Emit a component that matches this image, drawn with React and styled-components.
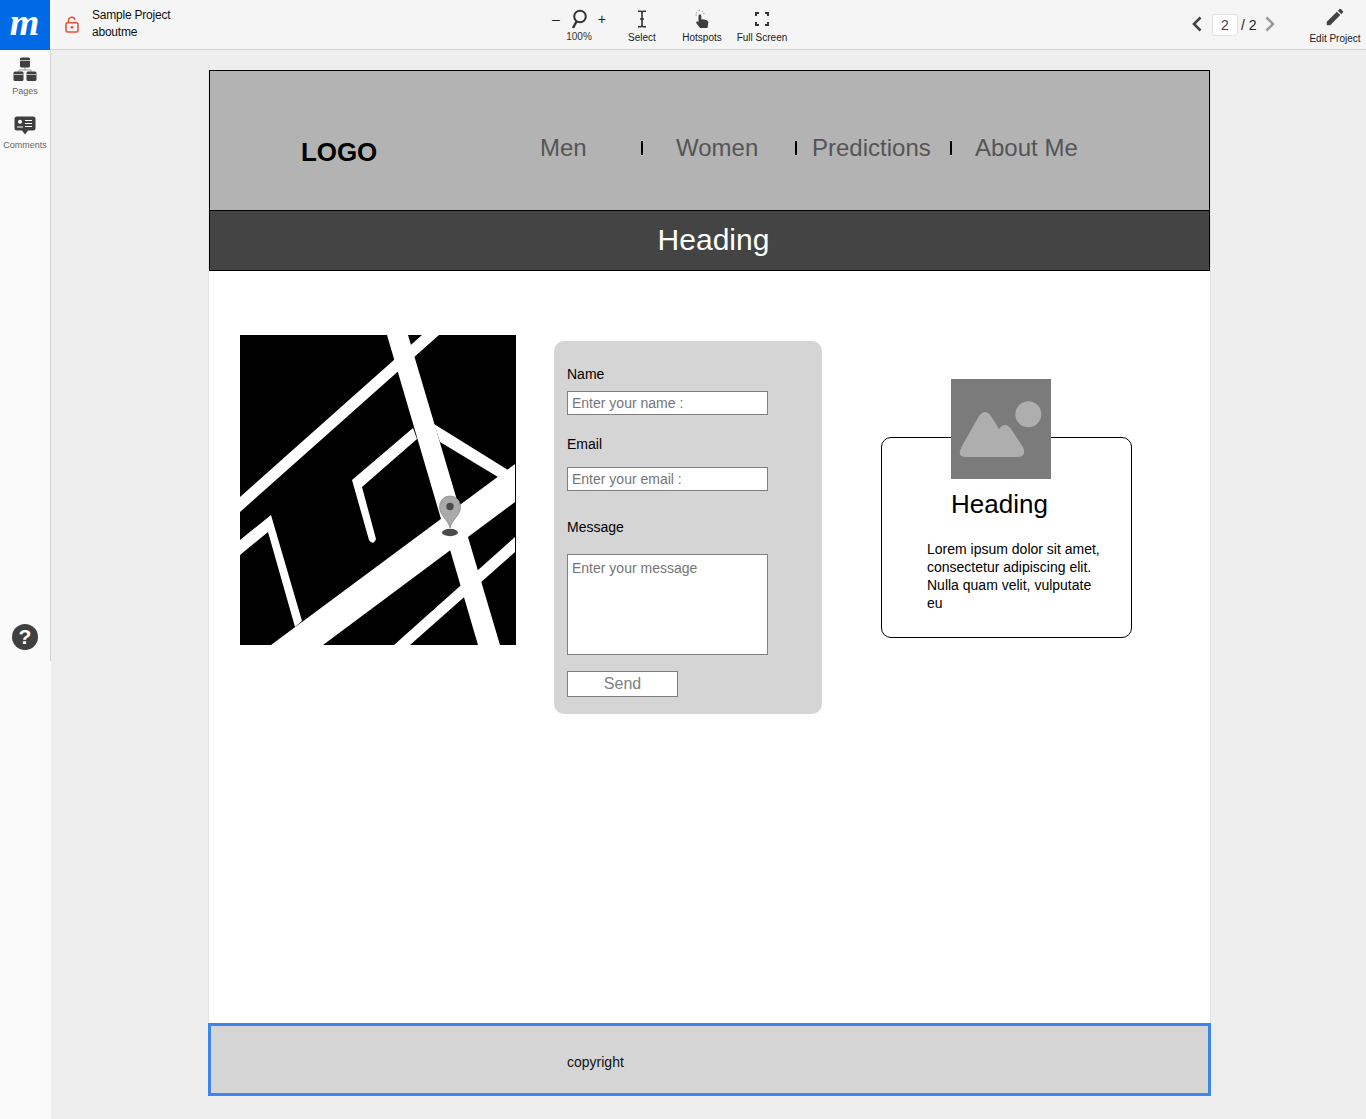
import styled, { createGlobalStyle } from "styled-components";
import { MdEdit } from "react-icons/md";

const GlobalStyle = createGlobalStyle`
  html, body {
    margin: 0;
    padding: 0;
    background: #eeeeee;
    font-family: "Liberation Sans", Arial, sans-serif;
    overflow: hidden;
  }
  * {
    box-sizing: border-box;
  }
`;

const Screen = styled.div`
  display: flex;
  flex-direction: column;
  width: 1366px;
  height: 1119px;
  overflow: hidden;
`;

const TopBar = styled.header`
  display: flex;
  align-items: stretch;
  flex: none;
  height: 50px;
  background: #f5f5f5;
  border-bottom: 1px solid #d2d2d2;
`;

const Brand = styled.div`
  display: flex;
  justify-content: center;
  align-items: center;
  flex: none;
  width: 50px;
  height: 50px;
  padding: 0 1px 6px 0;
  background: #0069e6;
  color: #fff;
  font-family: "Liberation Serif", serif;
  font-size: 38px;
  font-weight: bold;
  font-style: italic;
  line-height: 38px;
`;

const ProjectInfo = styled.div`
  display: flex;
  align-items: flex-start;
  flex: none;
  width: 500px;
  padding: 7px 0 0 15px;
`;

const LockWrap = styled.span`
  display: block;
  width: 27px;
  height: 26px;
  padding-top: 9px;
`;

const ProjectName = styled.div`
  font-size: 12px;
  line-height: 17px;
  letter-spacing: -0.22px;
  color: #111;
`;

const Tool = styled.div`
  display: flex;
  flex-direction: column;
  align-items: center;
  flex: none;
  width: ${(props) => props.$width}px;
  height: 49px;
`;

const ToolIcon = styled.div`
  display: flex;
  justify-content: center;
  align-items: center;
  gap: ${(props) => props.$gap || 0}px;
  height: 32px;
  padding-top: 5px;
  color: #222;
  font-size: 14px;
`;

const ToolLabel = styled.span`
  font-size: 10px;
  line-height: 12px;
  color: #222;
`;

const ZoomLabel = styled(ToolLabel)`
  margin-top: -1px;
  color: #333;
`;

const Pager = styled.div`
  display: flex;
  align-items: flex-start;
  margin-left: auto;
  padding: 14px 0 0 0;
`;

const PageBox = styled.div`
  width: 26px;
  height: 22px;
  margin: 0 3px 0 9px;
  background: #fff;
  border: 1px solid #e2e2e2;
  border-radius: 3px;
  text-align: center;
  font-size: 14px;
  line-height: 20px;
  color: #444;
`;

const PageTotal = styled.span`
  width: 20px;
  margin-right: 3px;
  font-size: 14px;
  line-height: 22px;
  color: #222;
`;

const EditTool = styled.div`
  display: flex;
  flex-direction: column;
  align-items: center;
  flex: none;
  margin: 0 5px 0 33px;
  width: 52px;
  padding-top: 6px;
  color: #444;
`;

const EditLabel = styled(ToolLabel)`
  margin-top: 5px;
`;

const Body = styled.div`
  display: flex;
  flex: 1;
  min-height: 0;
`;

const SideRail = styled.aside`
  flex: none;
  width: 51px;
  background: #fafafa;
`;

const SidePanel = styled.div`
  display: flex;
  flex-direction: column;
  align-items: center;
  height: 611px;
  border-right: 1px solid #d2d2d2;
  padding-top: 7px;
`;

const SideItem = styled.div`
  display: flex;
  flex-direction: column;
  align-items: center;
  height: ${(props) => props.$height}px;
`;

const SideLabel = styled.span`
  margin-top: 4px;
  font-size: 9px;
  line-height: 12px;
  color: #666;
`;

const HelpButton = styled.div`
  width: 26px;
  height: 26px;
  margin-top: 458px;
  border-radius: 50%;
  background: #404040;
  color: #fff;
  text-align: center;
  font-size: 21px;
  font-weight: bold;
  line-height: 26px;
`;

const Canvas = styled.main`
  flex: 1;
  padding: 20px 0 0 158px;
  background: #eeeeee;
`;

const Page = styled.div`
  display: flex;
  flex-direction: column;
  width: 1001px;
  height: 1026px;
  background: #fff;
  box-shadow: -1px 0 #e4e4e4, 1px 0 #e4e4e4;
`;

const SiteHeader = styled.div`
  display: flex;
  flex: none;
  height: 140px;
  background: #b3b3b3;
  border: 1px solid #000;
  border-bottom: none;
  padding: 65px 0 0 91px;
`;

const SiteLogo = styled.div`
  width: 239px;
  font-size: 26px;
  font-weight: bold;
  letter-spacing: -0.1px;
  line-height: 33px;
  color: #000;
`;

const Nav = styled.nav`
  display: grid;
  grid-template-columns: 101px 35px 119px 17px 138px 25px auto;
  align-self: flex-start;
  margin-top: -3px;
  font-size: 24px;
  line-height: 30px;
  color: #555;
`;

const NavSep = styled.span`
  display: block;
  width: 2px;
  height: 14px;
  margin-top: 8px;
  background: #000;
`;

const Band = styled.div`
  flex: none;
  height: 61px;
  background: #444;
  border: 1px solid #000;
  padding-left: 8px;
  text-align: center;
  font-size: 30px;
  line-height: 57px;
  color: #fff;
`;

const Content = styled.div`
  display: flex;
  align-items: flex-start;
  flex: 1;
  padding-left: 31px;
`;

const MapBox = styled.div`
  flex: none;
  width: 276px;
  height: 310px;
  margin-top: 64px;
  background: #000;

  svg {
    display: block;
  }
`;

const ContactForm = styled.form`
  flex: none;
  width: 268px;
  height: 373px;
  margin: 70px 0 0 38px;
  padding: 25px 0 0 13px;
  background: #d5d5d5;
  border-radius: 10px;
`;

const FieldLabel = styled.label`
  display: block;
  margin-top: ${(props) => props.$top}px;
  margin-bottom: ${(props) => props.$gap}px;
  font-size: 14px;
  line-height: 16px;
  color: #000;
`;

const TextInput = styled.input`
  display: block;
  width: 201px;
  height: 24px;
  margin: 0;
  padding: 0 4px;
  background: #fff;
  border: 1px solid #808080;
  border-radius: 0;
  outline: none;
  font-family: inherit;
  font-size: 14px;

  &::placeholder {
    color: #757575;
    opacity: 1;
  }
`;

const MessageInput = styled.textarea`
  display: block;
  width: 201px;
  height: 101px;
  margin: 0;
  padding: 5px 4px;
  background: #fff;
  border: 1px solid #808080;
  border-radius: 0;
  outline: none;
  resize: none;
  font-family: inherit;
  font-size: 14px;
  line-height: 16px;

  &::placeholder {
    color: #757575;
    opacity: 1;
  }
`;

const SendButton = styled.button`
  display: block;
  width: 111px;
  height: 26px;
  margin: 16px 0 0;
  padding: 0;
  background: #fff;
  border: 1px solid #808080;
  font-family: inherit;
  font-size: 16px;
  color: #808080;
`;

const InfoCard = styled.div`
  position: relative;
  flex: none;
  width: 251px;
  height: 201px;
  margin: 166px 0 0 59px;
  padding: 48px 0 0 45px;
  background: #fff;
  border: 1px solid #000;
  border-radius: 10px;
`;

const CardImage = styled.div`
  position: absolute;
  top: -59px;
  left: 69px;
  width: 100px;
  height: 100px;
  background: #7b7b7b;

  svg {
    display: block;
  }
`;

const CardHeading = styled.h2`
  margin: 0 0 0 24px;
  font-size: 26px;
  font-weight: normal;
  line-height: 36px;
  color: #000;
`;

const CardText = styled.p`
  width: 180px;
  margin: 18px 0 0;
  font-size: 14px;
  line-height: 18px;
  color: #000;
`;

const Footer = styled.footer`
  display: flex;
  align-items: center;
  flex: none;
  width: 1003px;
  height: 73px;
  margin: 0 -1px;
  padding: 4px 0 0 356px;
  background: #d5d5d5;
  border: 3px solid #3d85ee;
  font-size: 14px;
  color: #111;
`;

function LockIcon() {
  return (
    <svg width="14" height="17" viewBox="0 0 14 17" fill="none">
      <path d="M3.5 7V4.5a3.3 3.3 0 0 1 6.5-.8" stroke="#e8503a" strokeWidth="1.5" />
      <rect x="1" y="6.7" width="12" height="9.3" rx="1.5" stroke="#e8503a" strokeWidth="1.6" />
      <circle cx="7" cy="11.3" r="1.4" fill="#e8503a" />
    </svg>
  );
}

function SearchIcon() {
  return (
    <svg width="16" height="20" viewBox="0 0 16 20" fill="none">
      <circle cx="9" cy="7.5" r="5.8" stroke="#333" strokeWidth="2" />
      <path d="M5.5 12.5L2 19" stroke="#333" strokeWidth="2.4" />
    </svg>
  );
}

function CursorIcon() {
  return (
    <svg width="12" height="18" viewBox="0 0 12 18" fill="none">
      <path d="M2 1.2h3l1 1 1-1h3M2 16.8h3l1-1 1 1h3" stroke="#333" strokeWidth="1.5" />
      <path d="M6 2v14M4 9h4" stroke="#333" strokeWidth="1.6" />
    </svg>
  );
}

function HandIcon() {
  return (
    <svg width="16" height="20" viewBox="0 0 16 20">
      <path
        d="M4.5 7a1.4 1.4 0 0 1 2.8 0V10.5l1-.3 1 .3 1-.1 3 1.2q1 .5 1 1.8L13.5 19H6L2.5 14.5q-1-1.6.6-2.2l1.4.8Z"
        fill="#3d3d3d"
      />
      <path
        d="M2.2 6.5a4 4 0 0 1 1-3.8M4.6 1.6h1.6M8.5 2.4a4 4 0 0 1 1.5 3"
        fill="none"
        stroke="#777"
        strokeWidth="1"
        strokeDasharray="1 1"
      />
    </svg>
  );
}

function FullScreenIcon() {
  return (
    <svg width="14" height="14" viewBox="0 0 14 14" fill="none">
      <path d="M1 4V1h3M10 1h3v3M13 10v3h-3M4 13H1v-3" stroke="#333" strokeWidth="2" />
    </svg>
  );
}

function ChevronIcon({ left, color }) {
  return (
    <svg width="12" height="18" viewBox="0 0 12 18" fill="none" style={{ marginTop: 1 }}>
      <path
        d={left ? "M9.5 2.5L3 9l6.5 6.5" : "M2.5 2.5L9 9l-6.5 6.5"}
        stroke={color}
        strokeWidth="2.6"
      />
    </svg>
  );
}

function PagesIcon() {
  return (
    <svg width="24" height="24" viewBox="0 0 24 24">
      <path d="M12 10v3M6 15v-2h12v2" fill="none" stroke="#999" strokeWidth="1" />
      <rect x="7" y="0.5" width="10" height="10" rx="1.5" fill="#3f3f3f" />
      <rect x="0.5" y="14.5" width="10" height="9.5" rx="1.5" fill="#3f3f3f" />
      <rect x="13.5" y="14.5" width="10" height="9.5" rx="1.5" fill="#3f3f3f" />
      <path d="M7 3.5h10M0.5 17.5h10M13.5 17.5h10" stroke="#bbb" strokeWidth="1" />
    </svg>
  );
}

function CommentsIcon() {
  return (
    <svg width="22" height="19" viewBox="0 0 22 19">
      <path
        d="M3 0.5h16a2.5 2.5 0 0 1 2.5 2.5v9a2.5 2.5 0 0 1-2.5 2.5h-5L11 18.5l-3-4H3A2.5 2.5 0 0 1 0.5 12V3A2.5 2.5 0 0 1 3 0.5Z"
        fill="#3f3f3f"
      />
      <circle cx="6" cy="5.8" r="2" fill="#fff" />
      <path d="M3 11h6M11 4.5h7M11 7.5h7M11 10.5h7" stroke="#fff" strokeWidth="1.2" />
    </svg>
  );
}

function StreetMap() {
  return (
    <svg width="276" height="310" viewBox="0 0 276 310">
      <g fill="#fff">
        <polygon points="147,0 168,0 260,310 238,310" />
        <polygon points="0,162 182,0 199,0 0,177" />
        <polygon points="31,310 275,129 275,167 83,310" />
        <polygon points="194,89 268,135 258,142 200,107" />
        <path d="M173,93 L112,145 L129,205 Q133,211 136,204 L122,152 L177,104 Z" />
        <polygon points="0,205 31,180 62,286 55,292 28,197 0,220" />
        <polygon points="275,202 154,310 170,310 275,217" />
      </g>
      <ellipse cx="210" cy="197.5" rx="8" ry="3.7" fill="#4a4a4a" />
      <path
        d="M210,193 C208,184 199.5,181 199.5,171.5 a10.5,10.5 0 0 1 21,0 C220.5,181 212,184 210,193 Z"
        fill="#aaa"
        stroke="#888"
        strokeWidth="0.8"
      />
      <circle cx="210" cy="171.5" r="3.7" fill="#4a4a4a" />
    </svg>
  );
}

function PictureIcon() {
  return (
    <svg width="100" height="100" viewBox="0 0 100 100">
      <circle cx="77.3" cy="35.3" r="13" fill="#aeaeae" />
      <path
        d="M15 78Q5 78 11 67L28 37Q34 29 40 37L48 50Q54 42 60 50L72 68Q76 78 66 78Z"
        fill="#aeaeae"
      />
    </svg>
  );
}

export default function App() {
  return (
    <Screen>
      <GlobalStyle />
      <TopBar>
        <Brand>m</Brand>
        <ProjectInfo>
          <LockWrap>
            <LockIcon />
          </LockWrap>
          <ProjectName>
            Sample Project
            <br />
            aboutme
          </ProjectName>
        </ProjectInfo>
        <Tool $width={58}>
          <ToolIcon $gap={11}>
            <span>–</span>
            <SearchIcon />
            <span>+</span>
          </ToolIcon>
          <ZoomLabel>100%</ZoomLabel>
        </Tool>
        <Tool $width={68}>
          <ToolIcon>
            <CursorIcon />
          </ToolIcon>
          <ToolLabel>Select</ToolLabel>
        </Tool>
        <Tool $width={52}>
          <ToolIcon>
            <HandIcon />
          </ToolIcon>
          <ToolLabel>Hotspots</ToolLabel>
        </Tool>
        <Tool $width={68}>
          <ToolIcon>
            <FullScreenIcon />
          </ToolIcon>
          <ToolLabel>Full Screen</ToolLabel>
        </Tool>
        <Pager>
          <ChevronIcon left color="#444" />
          <PageBox>2</PageBox>
          <PageTotal>/ 2</PageTotal>
          <ChevronIcon color="#999" />
        </Pager>
        <EditTool>
          <MdEdit size={22} />
          <EditLabel>Edit Project</EditLabel>
        </EditTool>
      </TopBar>
      <Body>
        <SideRail>
          <SidePanel>
            <SideItem $height={59}>
              <PagesIcon />
              <SideLabel>Pages</SideLabel>
            </SideItem>
            <SideItem $height={50}>
              <CommentsIcon />
              <SideLabel>Comments</SideLabel>
            </SideItem>
            <HelpButton>?</HelpButton>
          </SidePanel>
        </SideRail>
        <Canvas>
          <Page>
            <SiteHeader>
              <SiteLogo>LOGO</SiteLogo>
              <Nav>
                <span>Men</span>
                <NavSep />
                <span>Women</span>
                <NavSep />
                <span>Predictions</span>
                <NavSep />
                <span>About Me</span>
              </Nav>
            </SiteHeader>
            <Band>Heading</Band>
            <Content>
              <MapBox>
                <StreetMap />
              </MapBox>
              <ContactForm>
                <FieldLabel $top={0} $gap={9}>
                  Name
                </FieldLabel>
                <TextInput placeholder="Enter your name :" />
                <FieldLabel $top={21} $gap={15}>
                  Email
                </FieldLabel>
                <TextInput placeholder="Enter your email :" />
                <FieldLabel $top={28} $gap={19}>
                  Message
                </FieldLabel>
                <MessageInput placeholder="Enter your message" />
                <SendButton type="button">Send</SendButton>
              </ContactForm>
              <InfoCard>
                <CardImage>
                  <PictureIcon />
                </CardImage>
                <CardHeading>Heading</CardHeading>
                <CardText>
                  Lorem ipsum dolor sit amet, consectetur adipiscing elit. Nulla
                  quam velit, vulputate eu
                </CardText>
              </InfoCard>
            </Content>
            <Footer>copyright</Footer>
          </Page>
        </Canvas>
      </Body>
    </Screen>
  );
}
